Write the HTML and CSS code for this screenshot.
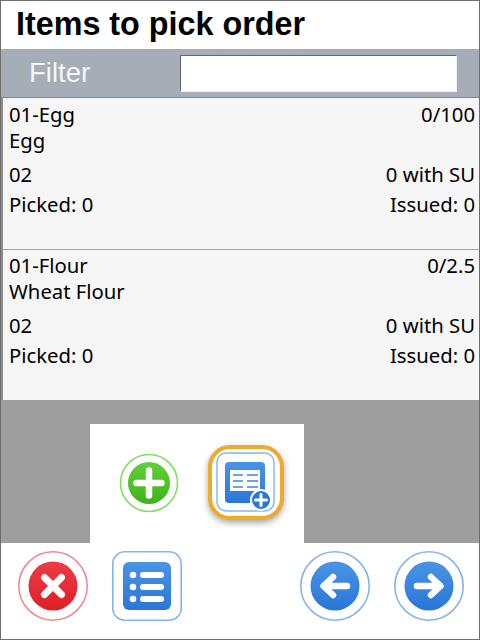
FILE: index.html
```html
<!DOCTYPE html>
<html lang="en">
<head>
<meta charset="utf-8">
<title>Items to pick order</title>
<link rel="stylesheet" href="styles.css">
</head>
<body>
<div class="app">
  <h1 class="title">Items to pick order</h1>
  <div class="filter">
    <label class="filter-label" for="f">Filter</label>
    <input class="filter-input" id="f" type="text">
  </div>
  <div class="list">
    <div class="item">
      <div class="row r1"><span>01-Egg</span><span>0/100</span></div>
      <div class="row r2"><span>Egg</span></div>
      <div class="row r3"><span>02</span><span>0 with SU</span></div>
      <div class="row r4"><span>Picked: 0</span><span>Issued: 0</span></div>
    </div>
    <div class="item">
      <div class="row r1"><span>01-Flour</span><span>0/2.5</span></div>
      <div class="row r2"><span>Wheat Flour</span></div>
      <div class="row r3"><span>02</span><span>0 with SU</span></div>
      <div class="row r4"><span>Picked: 0</span><span>Issued: 0</span></div>
    </div>
  </div>
  <div class="backdrop">
    <div class="popup">
      <svg class="ico-add" viewBox="0 0 60 60" width="60" height="60">
        <defs>
          <linearGradient id="g" x1="0" y1="0" x2="0" y2="1"><stop offset="0" stop-color="#62cf38"/><stop offset="1" stop-color="#3fb31c"/></linearGradient>
        </defs>
        <circle cx="30" cy="30" r="28.500" fill="#fff" stroke="#7fdc60" stroke-width="1.500"/>
        <circle cx="30" cy="30" r="21" fill="url(#g)"/>
        <path d="M30 17.500v25M17.500 30h25" stroke="#fff" stroke-width="6.500" stroke-linecap="round"/>
      </svg>
      <div class="selected">
        <svg viewBox="0 0 60 60" width="60" height="60">
          <defs>
            <linearGradient id="b1" x1="0" y1="0" x2="0" y2="1"><stop offset="0" stop-color="#4a94e4"/><stop offset="1" stop-color="#2a76d6"/></linearGradient>
          </defs>
          <rect x="1" y="1" width="57" height="58" rx="9" fill="#fff" stroke="#85b5e8" stroke-width="1.400"/>
          <rect x="9" y="10" width="40" height="41" rx="4" fill="url(#b1)"/>
          <rect x="14" y="18" width="30" height="21" fill="#fff"/>
          <path d="M17 23h10M31 23h11M17 29h10M31 29h11M17 35h10M31 35h11" stroke="#3f87dd" stroke-width="1.600"/>
          <circle cx="45" cy="48" r="10" fill="#2a76d6" stroke="#fff" stroke-width="2"/>
          <path d="M45 42.500v11M39.500 48h11" stroke="#fff" stroke-width="3" stroke-linecap="round"/>
        </svg>
      </div>
    </div>
  </div>
  <div class="footer">
    <svg viewBox="0 0 70 70" width="70" height="70">
      <defs>
        <linearGradient id="r" x1="0" y1="0" x2="0" y2="1"><stop offset="0" stop-color="#ee3b47"/><stop offset="1" stop-color="#dc2026"/></linearGradient>
      </defs>
      <circle cx="35" cy="35" r="34.200" fill="#fff" stroke="#e88d92" stroke-width="1.600"/>
      <circle cx="35" cy="35" r="24.500" fill="url(#r)"/>
      <path d="M26.500 26.500l17 17M43.500 26.500l-17 17" stroke="#fff" stroke-width="7" stroke-linecap="round"/>
    </svg>
    <svg viewBox="0 0 70 70" width="70" height="70">
      <defs>
        <linearGradient id="b2" x1="0" y1="0" x2="0" y2="1"><stop offset="0" stop-color="#4a94e4"/><stop offset="1" stop-color="#2a76d6"/></linearGradient>
      </defs>
      <rect x=".8" y=".8" width="68.400" height="68.400" rx="12" fill="#fff" stroke="#85b5e8" stroke-width="1.600"/>
      <rect x="11" y="11" width="48" height="48" rx="6" fill="url(#b2)"/>
      <circle cx="21" cy="24" r="3.300" fill="#fff"/>
      <circle cx="21" cy="36" r="3.300" fill="#fff"/>
      <circle cx="21" cy="48" r="3.300" fill="#fff"/>
      <path d="M31 24h18M31 36h18M31 48h18" stroke="#fff" stroke-width="6" stroke-linecap="round"/>
    </svg>
    <div class="nav">
      <svg viewBox="0 0 70 70" width="70" height="70">
        <defs>
          <linearGradient id="b3" x1="0" y1="0" x2="0" y2="1"><stop offset="0" stop-color="#4a94e4"/><stop offset="1" stop-color="#2a76d6"/></linearGradient>
        </defs>
        <circle cx="35" cy="35" r="34.200" fill="#fff" stroke="#85b5e8" stroke-width="1.600"/>
        <circle cx="35" cy="35" r="24.500" fill="url(#b3)"/>
        <path d="M47 35H24M33 26l-9.500 9 9.500 9" fill="none" stroke="#fff" stroke-width="6.500" stroke-linecap="round" stroke-linejoin="round"/>
      </svg>
      <svg viewBox="0 0 70 70" width="70" height="70">
        <circle cx="35" cy="35" r="34.200" fill="#fff" stroke="#85b5e8" stroke-width="1.600"/>
        <circle cx="35" cy="35" r="24.500" fill="url(#b3)"/>
        <path d="M23 35h23M37 26l9.500 9-9.500 9" fill="none" stroke="#fff" stroke-width="6.500" stroke-linecap="round" stroke-linejoin="round"/>
      </svg>
    </div>
  </div>
</div>
</body>
</html>
```
FILE: styles.css
```css
* { box-sizing: border-box; }
html, body { margin: 0; padding: 0; }
body { width: 480px; height: 640px; overflow: hidden; background: #fff; }
.app {
  width: 480px;
  height: 640px;
  border: 1px solid #6e6e6e;
  display: flex;
  flex-direction: column;
  background: #fff;
  font-family: "Noto Sans", "DejaVu Sans", sans-serif;
  color: #000;
}
.title {
  margin: 0;
  height: 48px;
  padding-left: 15px;
  flex: none;
  font-family: "Liberation Sans", Arial, sans-serif;
  font-size: 32.300px;
  font-weight: 700;
  line-height: 47px;
  color: #000;
}
.filter {
  height: 49px;
  flex: none;
  background: #a5aeb6;
  display: flex;
  align-items: center;
  padding: 0 22px 0 28px;
  border-bottom: 1px solid #7d868e;
}
.filter-label {
  font-family: "Liberation Sans", Arial, sans-serif;
  font-size: 27.500px;
  color: #f4f6f8;
  width: 151px;
  margin-top: -1px;
}
.filter-input {
  width: 277px;
  height: 37px;
  margin-top: 1px;
  background: #fff;
  border: 1px solid #eef0f2;
  border-top-color: #666;
  border-left-color: #666;
  outline: none;
  padding: 0;
}
.list {
  flex: none;
  height: 302px;
  background: #f6f6f6;
  border-left: 2px solid #8c8c8c;
  font-size: 20.300px;
}
.item {
  height: 151px;
  padding: 3px 4px 0 6px;
}
.item + .item {
  border-top: 1px solid #a6a6a6;
  padding-top: 2px;
}
.row {
  display: flex;
  justify-content: space-between;
  height: 26px;
  line-height: 26px;
}
.r3 { margin-top: 8px; }
.r4 { margin-top: 4px; }
.backdrop {
  flex: 1;
  min-height: 0;
  background: #9e9e9e;
  padding: 24px 0 0 89px;
  display: flex;
}
.popup {
  width: 214px;
  height: 119px;
  background: #fff;
  display: flex;
  align-items: flex-start;
  padding: 29px 0 0 29px;
}
.selected {
  width: 76px;
  height: 75px;
  margin: -8px 0 0 29px;
  border: 4px solid #eeaa2a;
  border-radius: 22px;
  box-shadow: 0 3px 6px rgba(0, 0, 0, .35);
  background: #fff;
  padding: 3px 0 0 4px;
  display: flex;
}
.footer {
  flex: none;
  height: 96px;
  display: flex;
  align-items: flex-start;
  gap: 24px;
  padding: 8px 15px 0 17px;
}
.nav {
  margin-left: auto;
  display: flex;
  gap: 24px;
}
svg { display: block; flex: none; }
```
